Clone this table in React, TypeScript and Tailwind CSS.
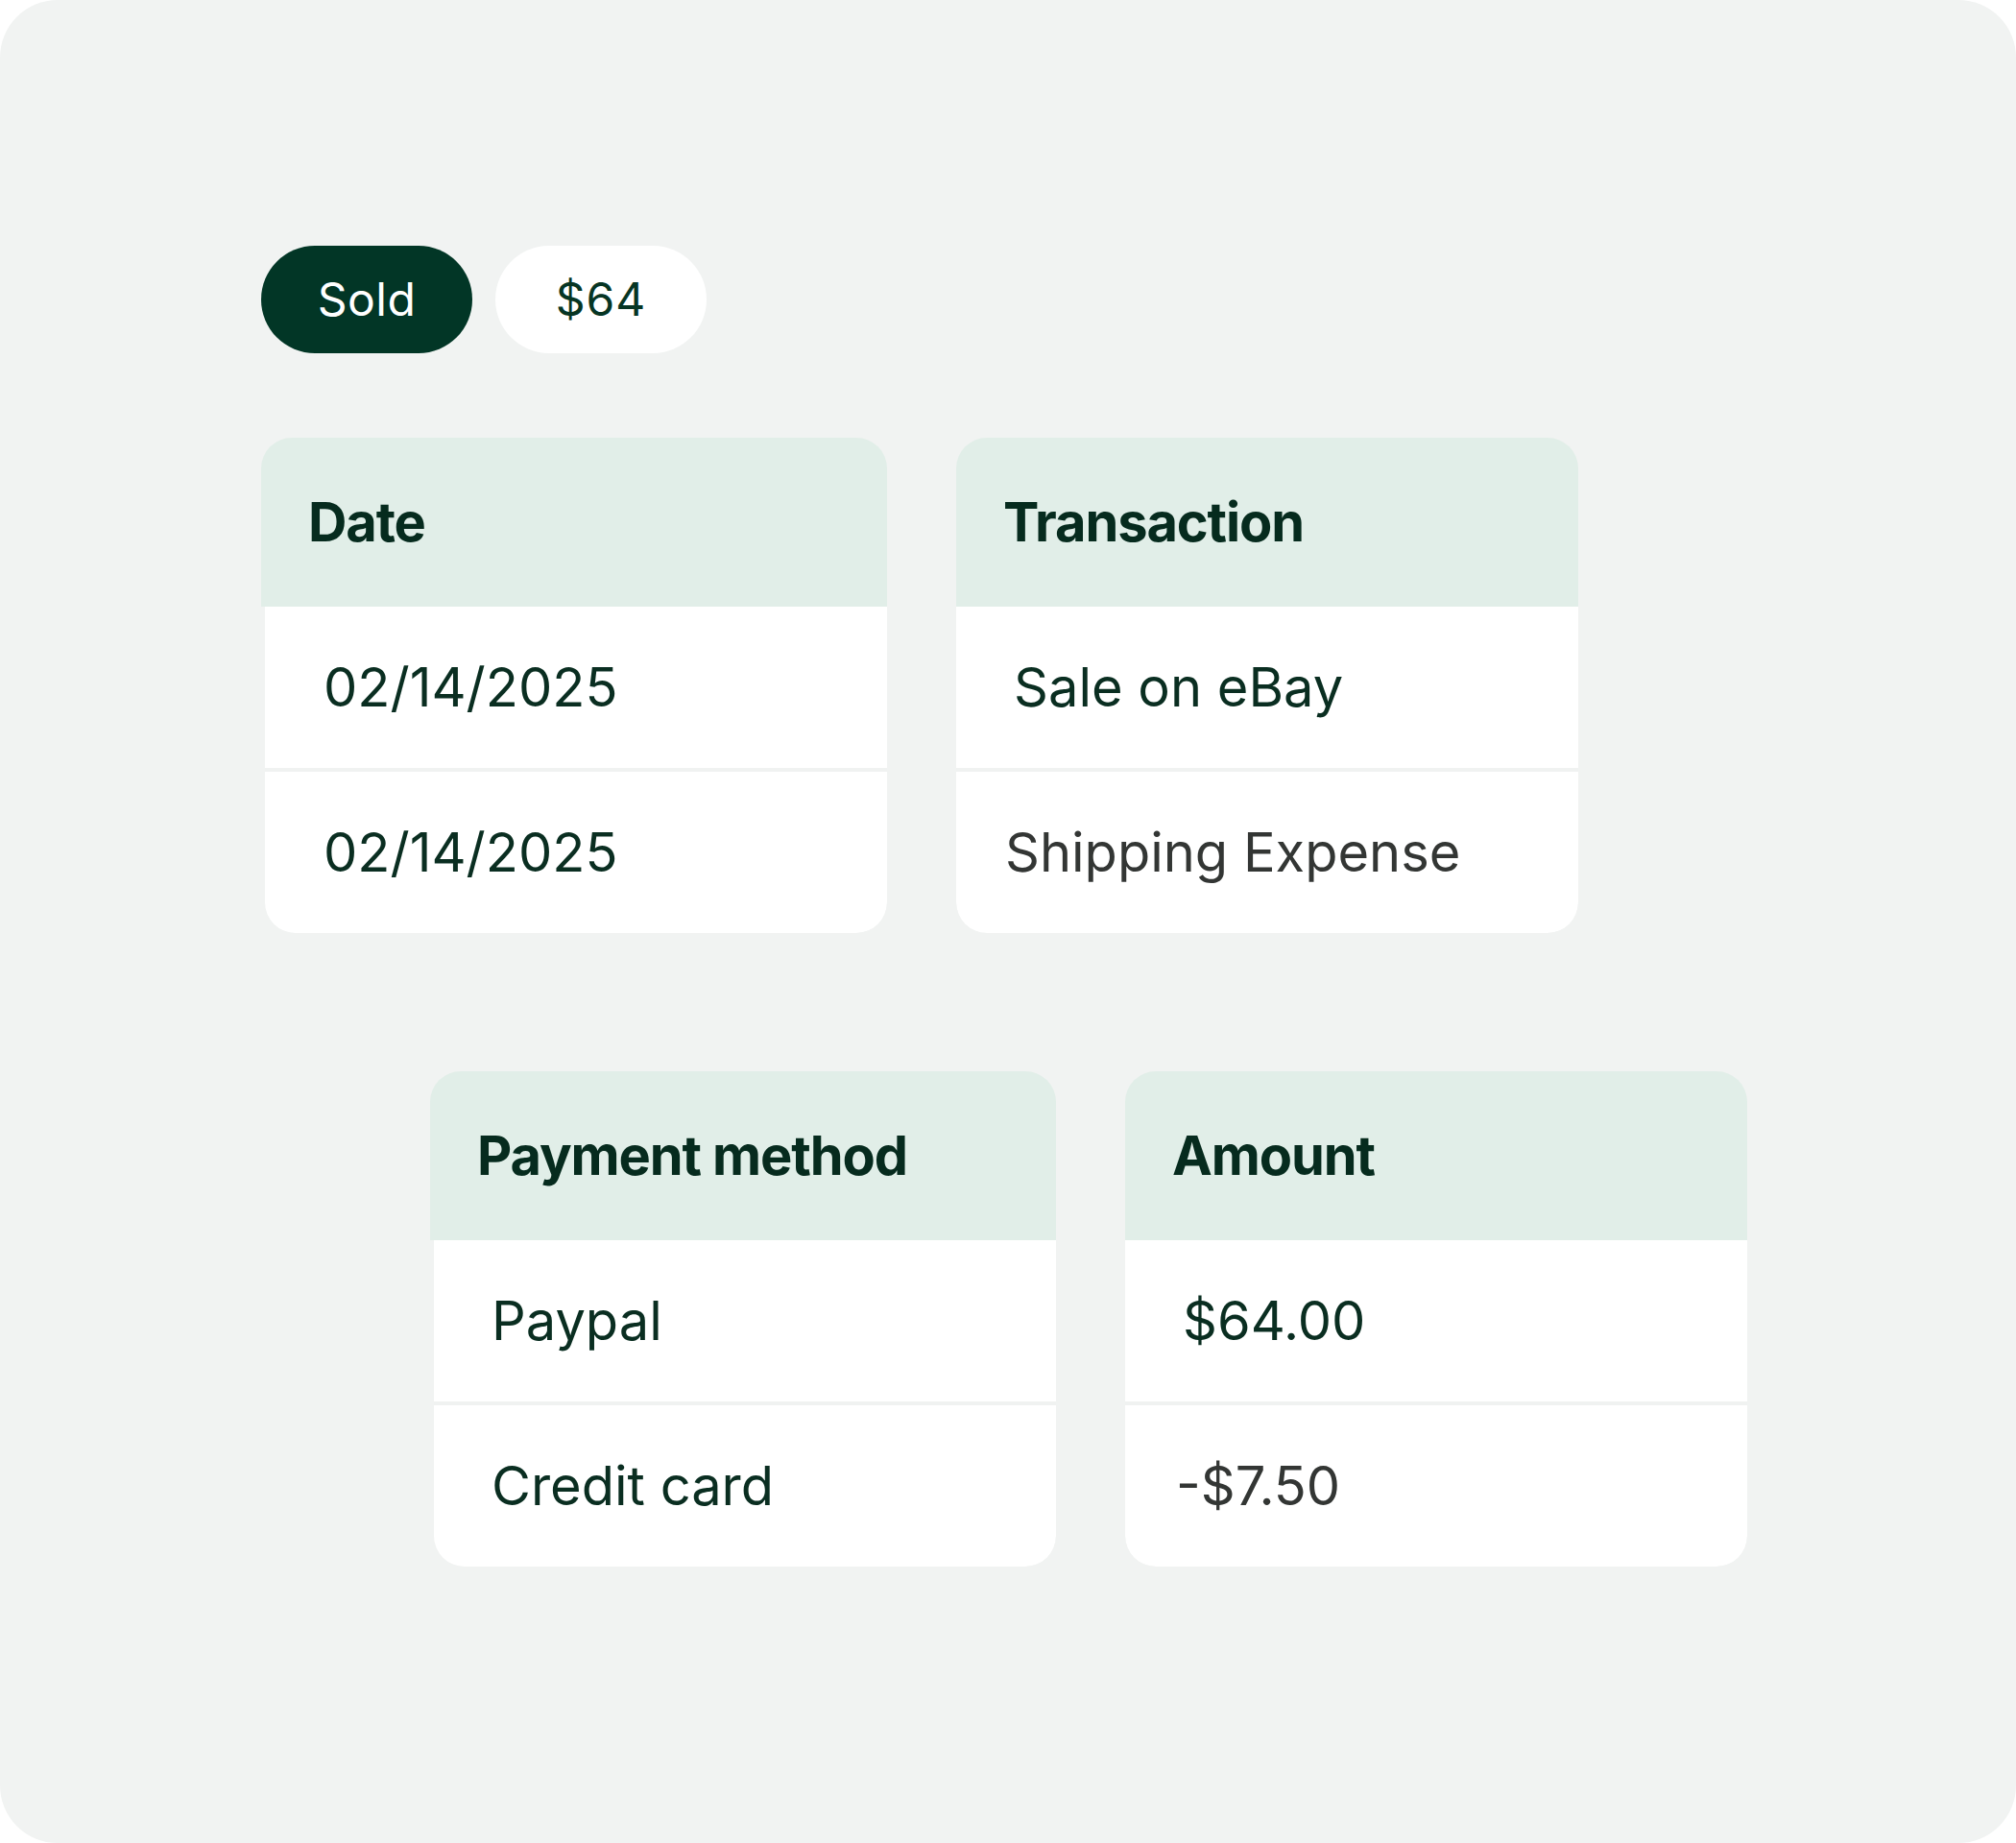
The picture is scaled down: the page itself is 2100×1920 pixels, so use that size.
import React from "react";

type Row = { text: string; pad: string; muted?: boolean };
type Col = { title: string; rows: Row[]; inset?: boolean; width: string };

const topCols: Col[] = [
  {
    title: "Date",
    width: "w-[652px]",
    inset: true,
    rows: [
      { text: "02/14/2025", pad: "pl-[61px]" },
      { text: "02/14/2025", pad: "pl-[61px]" },
    ],
  },
  {
    title: "Transaction",
    width: "w-[648px]",
    rows: [
      { text: "Sale on eBay", pad: "pl-[60px]" },
      { text: "Shipping Expense", pad: "pl-[51px]", muted: true },
    ],
  },
];

const bottomCols: Col[] = [
  {
    title: "Payment method",
    width: "w-[652px]",
    inset: true,
    rows: [
      { text: "Paypal", pad: "pl-[60px]" },
      { text: "Credit card", pad: "pl-[60px]" },
    ],
  },
  {
    title: "Amount",
    width: "w-[648px]",
    rows: [
      { text: "$64.00", pad: "pl-[60px]" },
      { text: "-$7.50", pad: "pl-[53px]", muted: true },
    ],
  },
];

function Card({ col }: { col: Col }) {
  return (
    <div className={`${col.width} rounded-[32px] overflow-hidden flex flex-col`}>
      {/* header */}
      <div className="h-[176px] bg-[#e1eee8] flex items-center pl-[49px]">
        <span className="text-[56px] font-bold tracking-[-0.02em] text-[#062b1e] leading-none">
          {col.title}
        </span>
      </div>
      {/* rows */}
      <div className={`flex flex-col bg-white rounded-b-[32px] ${col.inset ? "ml-1" : ""}`}>
        {col.rows.map((r, i) => (
          <div
            key={i}
            className={`h-[168px] flex items-center ${r.pad} ${
              i > 0 ? "border-t-4 border-[#f0f2f1] h-[172px]" : ""
            }`}
          >
            <span
              className={`text-[56px] leading-none ${
                r.muted ? "text-[#333634]" : "text-[#0a2e21]"
              }`}
            >
              {r.text}
            </span>
          </div>
        ))}
      </div>
    </div>
  );
}

export default function App() {
  return (
    <div
      className="w-[2100px] h-[1920px] bg-white"
      style={{ fontFamily: "Inter, 'Noto Sans', sans-serif" }}
    >
      <div className="w-full h-full rounded-[60px] bg-[#f1f3f2] pt-[256px] pl-[272px]">
        {/* status pills */}
        <div className="flex gap-[24px]">
          <div className="w-[220px] h-[112px] rounded-full bg-[#023626] text-white flex items-center justify-center text-[48px] tracking-[0.01em]">
            Sold
          </div>
          <div className="w-[220px] h-[112px] rounded-full bg-white text-[#063524] flex items-center justify-center text-[48px] tracking-[0.02em]">
            $64
          </div>
        </div>

        {/* top row */}
        <div className="flex gap-[72px] mt-[88px]">
          {topCols.map((c) => (
            <Card key={c.title} col={c} />
          ))}
        </div>

        {/* bottom row */}
        <div className="flex gap-[72px] mt-[144px] ml-[176px]">
          {bottomCols.map((c) => (
            <Card key={c.title} col={c} />
          ))}
        </div>
      </div>
    </div>
  );
}
